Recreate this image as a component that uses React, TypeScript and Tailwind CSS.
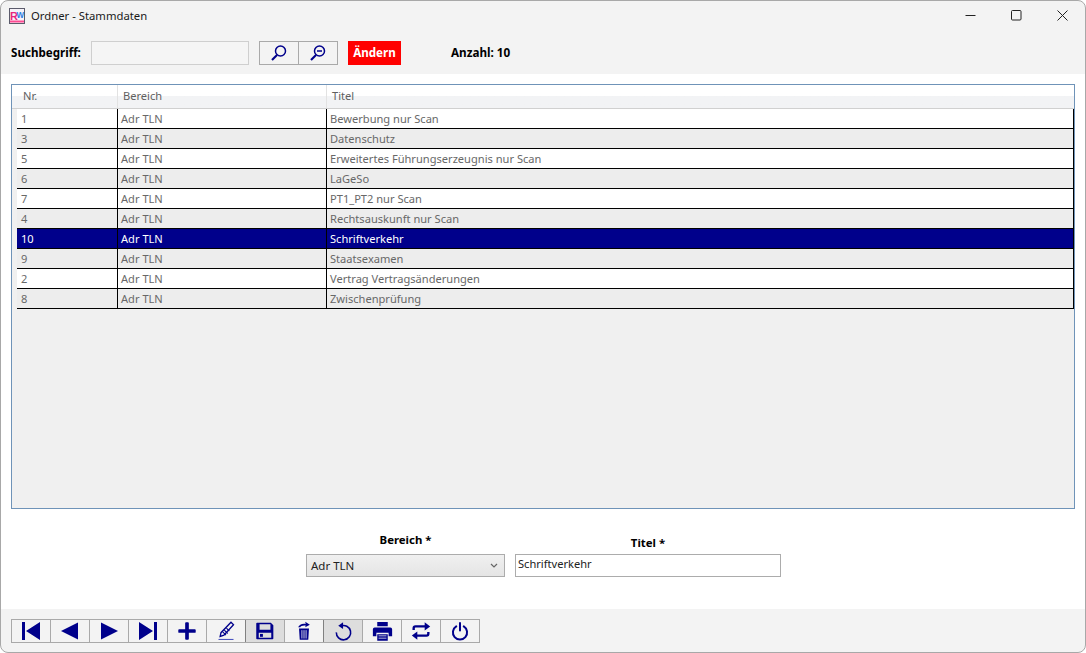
import React from "react";

const rows = [
  ["1", "Bewerbung nur Scan"],
  ["3", "Datenschutz"],
  ["5", "Erweitertes Führungserzeugnis nur Scan"],
  ["6", "LaGeSo"],
  ["7", "PT1_PT2 nur Scan"],
  ["4", "Rechtsauskunft nur Scan"],
  ["10", "Schriftverkehr"],
  ["9", "Staatsexamen"],
  ["2", "Vertrag Vertragsänderungen"],
  ["8", "Zwischenprüfung"],
];

const B = "#00008b";

function Ic({ children, size = 24 }: { children: React.ReactNode; size?: number }) {
  return (
    <svg width={size} height={size} viewBox="0 0 24 24" fill={B}>
      {children}
    </svg>
  );
}

const icons: { el: React.ReactNode; pressed?: boolean }[] = [
  { el: <Ic><path d="M3 3h3v18H3zM21 3v18L7 12z" /></Ic> },
  { el: <Ic><path d="M20 3.500v17L3 12z" /></Ic> },
  { el: <Ic><path d="M4 3.500v17l17-8.500z" /></Ic> },
  { el: <Ic><path d="M18 3h3v18h-3zM3 3v18l14-9z" /></Ic> },
  { el: <Ic size={22}><path d="M10 3.500a1 1 0 0 1 1-1h2a1 1 0 0 1 1 1V10h6.500a1 1 0 0 1 1 1v2a1 1 0 0 1-1 1H14v6.500a1 1 0 0 1-1 1h-2a1 1 0 0 1-1-1V14H3.500a1 1 0 0 1-1-1v-2a1 1 0 0 1 1-1H10z" /></Ic> },
  {
    el: (
      <Ic size={20}>
        <path d="M18 1.500l3 3-11.500 12.500-4.500 1.500 1-4.500z" fill="none" stroke={B} strokeWidth="1.600" />
        <path d="M8 13l4 4M10 11l4 4M12.500 8.500l3.500 3.500" stroke={B} strokeWidth="1.300" />
        <rect x="3" y="21.500" width="18" height="1.300" fill="#4a55c0" />
      </Ic>
    ),
  },
  {
    pressed: true,
    el: (
      <Ic size={20}>
        <path fillRule="evenodd" d="M2.500 2h16.500l3 3v16a1 1 0 0 1-1 1H2.500a1 1 0 0 1-1-1V3a1 1 0 0 1 1-1zM5.500 4v6.500h13V4zM4.500 14v6h15v-6z" />
        <rect x="6" y="15.500" width="3.500" height="3.500" />
      </Ic>
    ),
  },
  {
    el: (
      <Ic size={20}>
        <path d="M6 9h12l-.9 13.500H6.900z" />
        <path d="M9.500 11v10M12 11v10M14.500 11v10" stroke="#f3f3f3" strokeWidth="1" />
        <path d="M5 7.500 C6 4.500 10 2.500 14 3.500 L13.500 1 L19 4.500 L13.500 7.500 L14 5.500 C11 5 8 6 7.500 7.500z" />
      </Ic>
    ),
  },
  {
    pressed: true,
    el: (
      <Ic size={21}>
        <path d="M9 5.700A8.200 8.200 0 1 1 3.800 13" fill="none" stroke={B} strokeWidth="1.800" />
        <path d="M11.500 1.500v7.500L6 5.500z" />
      </Ic>
    ),
  },
  {
    el: (
      <Ic size={21}>
        <path fillRule="evenodd" d="M6 1h12v5H6zM3 7.500h18a2 2 0 0 1 2 2v8h-4v-4H5v4H1v-8a2 2 0 0 1 2-2z" />
        <path fillRule="evenodd" d="M6 15h12v7.500H6zM7.500 16.500v1h9v-1zM7.500 19v1h9v-1z" />
      </Ic>
    ),
  },
  {
    el: (
      <Ic size={22}>
        <path d="M4 11V9a2 2 0 0 1 2-2h11" fill="none" stroke={B} strokeWidth="2.600" />
        <path d="M16 2.500 22 7l-6 4.500z" />
        <path d="M20 13v2a2 2 0 0 1-2 2H7" fill="none" stroke={B} strokeWidth="2.600" />
        <path d="M8 12.500 2 17l6 4.500z" />
      </Ic>
    ),
  },
  {
    el: (
      <Ic size={20}>
        <path d="M7.500 6.500a8.500 8.500 0 1 0 9 0" fill="none" stroke={B} strokeWidth="2.400" strokeLinecap="round" />
        <path d="M12 2.500v9" stroke={B} strokeWidth="2.400" strokeLinecap="round" />
      </Ic>
    ),
  },
];

const font = { fontFamily: '"Noto Sans", "Open Sans", sans-serif' };

export default function App() {
  return (
    <div
      style={font}
      className="w-[1086px] h-[653px] flex flex-col bg-[#f3f3f3] border border-[#a8a8a8] rounded-[8px] overflow-hidden text-[11.100px] text-black"
    >
      {/* title bar */}
      <div className="h-[29px] flex items-center shrink-0 pl-[8px]">
        <svg width="16" height="16" viewBox="0 0 16 16" className="mr-[6px]">
          <rect x="0.500" y="0.500" width="15" height="15" fill="#f6f2f8" stroke="#5b5b6b" />
          <text x="1" y="11.500" fontSize="11" fontWeight="700" fill="#e8267c" fontFamily="Liberation Sans">R</text>
          <text x="7.500" y="10" fontSize="9" fontWeight="700" fill="#2b7de0" fontFamily="Liberation Sans" textLength="7.500" lengthAdjust="spacingAndGlyphs">W</text>
          <rect x="1" y="12.500" width="14" height="2" fill="#ff4a92" />
        </svg>
        <span className="text-[11.300px] text-[#1a1a1a] pt-[2px]">Ordner - Stammdaten</span>
        <div className="ml-auto flex items-center">
          <div className="w-[46px] h-[29px] flex items-center justify-center">
            <svg width="11" height="11" viewBox="0 0 11 11"><path d="M0.500 5.500h10" stroke="#222" /></svg>
          </div>
          <div className="w-[46px] h-[29px] flex items-center justify-center">
            <svg width="11" height="11" viewBox="0 0 11 11"><rect x="0.500" y="0.500" width="9.500" height="9.500" rx="1" fill="none" stroke="#222" /></svg>
          </div>
          <div className="w-[46px] h-[29px] flex items-center justify-center">
            <svg width="11" height="11" viewBox="0 0 11 11"><path d="M0.500 0.500l10 10M10.500 0.500l-10 10" stroke="#222" /></svg>
          </div>
        </div>
      </div>

      {/* search toolbar */}
      <div className="h-[44px] shrink-0 flex items-center pl-[10px] pt-[1px]">
        <span className="font-bold w-[80px] text-[11.600px]">Suchbegriff:</span>
        <div className="w-[158px] h-[24px] border border-[#cfcfcf] bg-[#f5f5f5]" />
        <div className="ml-[10px] flex h-[24px] border border-[#a9a9a9]">
          <div className="w-[39px] flex items-center justify-center border-r border-[#a9a9a9]">
            <svg width="18" height="18" viewBox="0 0 18 18">
              <circle cx="10.500" cy="7" r="5" fill="none" stroke={B} strokeWidth="1.500" />
              <path d="M7 11l-5 5" stroke={B} strokeWidth="2.200" />
            </svg>
          </div>
          <div className="w-[38px] flex items-center justify-center">
            <svg width="18" height="18" viewBox="0 0 18 18">
              <circle cx="10.500" cy="7" r="5" fill="none" stroke={B} strokeWidth="1.500" />
              <path d="M7 11l-5 5" stroke={B} strokeWidth="2.200" />
              <path d="M8 7h5" stroke={B} strokeWidth="1.300" />
            </svg>
          </div>
        </div>
        <div className="ml-[10px] w-[53px] h-[24px] bg-[#ff0000] text-white font-bold flex items-center justify-center text-[11.600px]">Ändern</div>
        <span className="ml-[50px] font-bold text-[11.700px]">Anzahl: 10</span>
      </div>

      {/* main */}
      <div className="flex-1 bg-white flex flex-col px-[10px] pt-[10px]">
        <div className="h-[425px] w-[1064px] shrink-0 border border-[#6f93b8] bg-[#f0f0f0] flex flex-col">
          <div className="h-[24px] shrink-0 flex pl-[5px] text-[#5f5f5f] border-b border-[#d0d0d0] bg-gradient-to-b from-white from-50% to-[#f2f3f5] to-50%">
            <div className="w-[101px] pl-[6px] flex items-center border-r border-[#e2e2e2]">Nr.</div>
            <div className="w-[209px] pl-[5px] flex items-center border-r border-[#e2e2e2]">Bereich</div>
            <div className="flex-1 pl-[5px] flex items-center">Titel</div>
          </div>
          {rows.map(([nr, titel], i) => {
            const sel = i === 6;
            const bg = sel ? "bg-[#00008b] text-white" : i % 2 === 0 ? "bg-white text-[#686868]" : "bg-[#ededed] text-[#686868]";
            return (
              <div key={nr} className="h-[20px] shrink-0 flex pl-[5px]">
                <div className={`flex-1 flex border-b border-r border-black ${bg}`}>
                  <div className="w-[101px] pl-[4px] pt-px flex items-center border-r border-black">{nr}</div>
                  <div className="w-[209px] pl-[3px] pt-px flex items-center border-r border-black">Adr TLN</div>
                  <div className="flex-1 pl-[3px] pt-px flex items-center">{titel}</div>
                </div>
              </div>
            );
          })}
        </div>

        {/* form */}
        <div className="flex justify-center pl-[1px] mt-[23px] gap-[10px]">
          <div className="w-[199px] flex flex-col items-center">
            <span className="font-bold h-[20px] leading-[16px] text-[11.400px]">Bereich *</span>
            <div className="w-full h-[23px] mt-[2px] border border-[#acacac] bg-gradient-to-b from-[#f0f0f0] to-[#e5e5e5] flex items-center justify-between pl-[4px] pr-[6px] text-[#222]">
              <span className="text-[11.500px]">Adr TLN</span>
              <svg width="8" height="6" viewBox="0 0 8 6"><path d="M1 1l3 3 3-3" fill="none" stroke="#666" strokeWidth="1.200" /></svg>
            </div>
          </div>
          <div className="w-[266px] flex flex-col items-center">
            <span className="font-bold h-[20px] leading-[20px] pt-[1px] text-[11.400px]">Titel *</span>
            <div className="w-full h-[23px] mt-[2px] border border-[#acacac] bg-white pl-[2px] flex items-start leading-[18px] text-[#222]">Schriftverkehr</div>
          </div>
        </div>
      </div>

      {/* bottom toolbar */}
      <div className="h-[43px] shrink-0 flex items-start pl-[10px] pt-[10px]">
        <div className="flex h-[24px] border-y border-r border-[#a9a9a9]">
          {icons.map((ic, i) => (
            <div
              key={i}
              className={`w-[39px] flex items-center justify-center border-l ${ic.pressed ? "bg-[#dddddd] border-[#808080]" : "border-[#a9a9a9]"}`}
            >
              {ic.el}
            </div>
          ))}
        </div>
      </div>
    </div>
  );
}
